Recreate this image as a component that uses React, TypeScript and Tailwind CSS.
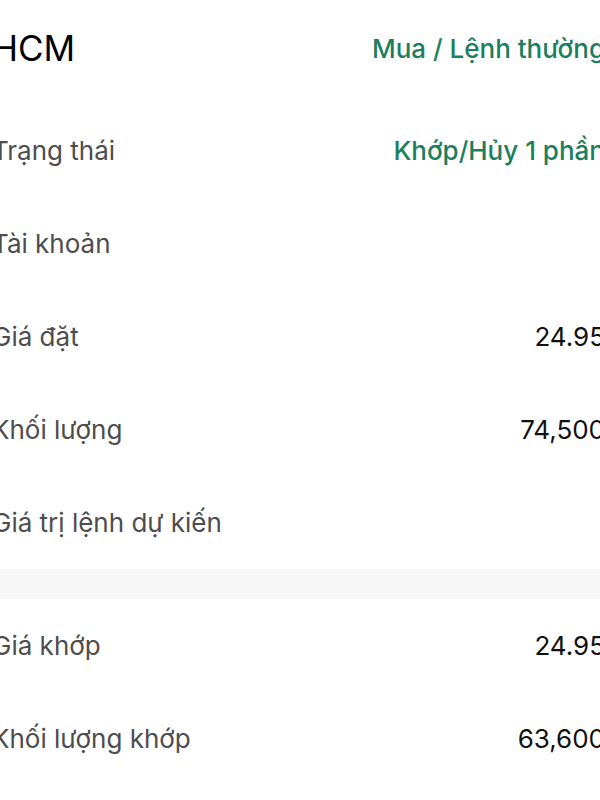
const rows = [
  { label: "Trạng thái", value: "Khớp/Hủy 1 phần", green: true },
  { label: "Tài khoản", value: "" },
  { label: "Giá đặt", value: "24.95" },
  { label: "Khối lượng", value: "74,500" },
  { label: "Giá trị lệnh dự kiến", value: "" },
];

const matched = [
  { label: "Giá khớp", value: "24.95" },
  { label: "Khối lượng khớp", value: "63,600" },
];

function Row({ label, value, green }: { label: string; value: string; green?: boolean }) {
  return (
    <div className="flex h-[93px] items-center justify-between">
      <span className="text-[26px] text-[#4d4d4d]">{label}</span>
      <span className={green ? "text-[26px] font-medium text-[#1b7f5e]" : "text-[26px] text-[#111111]"}>{value}</span>
    </div>
  );
}

export default function App() {
  return (
    <div className="h-[800px] w-[600px] overflow-hidden bg-white font-['Inter',sans-serif]">
      <div className="-ml-[8px] -mr-[5px]">
        {/* order header */}
        <div className="flex h-[104px] items-center justify-between pb-[8px]">
          <span className="text-[35px] text-black">HCM</span>
          <span className="text-[26px] font-medium text-[#1b7f5e]">Mua / Lệnh thường</span>
        </div>

        {rows.map((r) => (
          <Row key={r.label} {...r} />
        ))}

        <div className="h-[30px] bg-[#f7f7f7]" />

        {matched.map((r) => (
          <Row key={r.label} {...r} />
        ))}
      </div>
    </div>
  );
}
